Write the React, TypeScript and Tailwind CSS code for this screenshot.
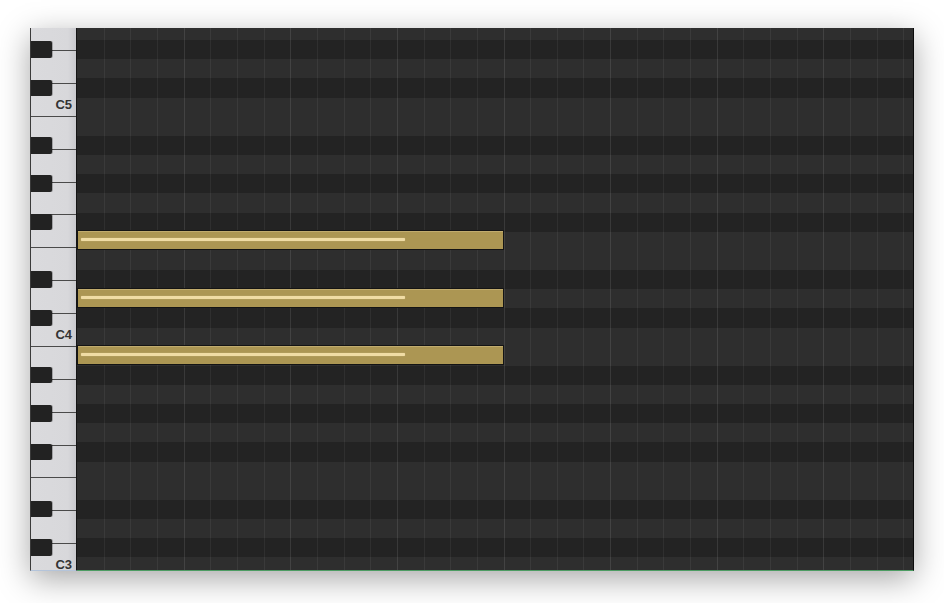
const NAMES = ['C', 'C#', 'D', 'D#', 'E', 'F', 'F#', 'G', 'G#', 'A', 'A#', 'B'];

// rows from the top of the viewport: E5 (partly hidden) down to C3 (partly hidden)
const TOP_MIDI = 76; // E5
const rows = Array.from({ length: 29 }, (_, i) => {
  const midi = TOP_MIDI - i;
  const name = NAMES[midi % 12];
  return { midi, black: name.includes('#') };
});

// white keys, top to bottom, starting at the E5 key
const whiteKeys = Array.from({ length: 17 }, (_, i) => {
  const order = ['E', 'D', 'C', 'B', 'A', 'G', 'F'];
  const name = order[i % 7];
  const octave = 5 - Math.floor((i + 4) / 7);
  return { name, octave };
});

const ROW_H = 19.17;
const notes = [
  { midi: 65, start: 0, beats: 16, velocity: 0.77 }, // F4
  { midi: 62, start: 0, beats: 16, velocity: 0.77 }, // D4
  { midi: 59, start: 0, beats: 16, velocity: 0.77 }, // B3
];
const BEAT_W = 26.67;

function Piano() {
  return (
    <div className="relative w-[47px] h-full shrink-0 overflow-hidden border-l border-l-[#3a3a3a] border-r border-r-[#141414] border-b border-b-[#b4c4da] bg-[linear-gradient(to_right,#dadadd_0%,#d8d8db_82%,#c9c9cd_100%)]">
      <div className="flex flex-col -mt-[9.79px]">
        {whiteKeys.map((k, i) => (
          <div
            key={i}
            className="h-[32.88px] shrink-0 border-b border-[#4a4a4a] flex items-end justify-end pr-[4px] pb-[6px]"
          >
            {k.name === 'C' && (
              <span className="text-[13px] leading-[10px] font-bold text-[#333] font-['Liberation_Sans',Arial,sans-serif]">
                C{k.octave}
              </span>
            )}
          </div>
        ))}
      </div>
      <div className="absolute inset-x-0 top-[-7px] flex flex-col">
        {rows.map((r) => (
          <div key={r.midi} className="h-[19.17px] shrink-0">
            {r.black && (
              <div className="mt-[1.2px] h-[16.4px] w-[21px] bg-[#222222] rounded-r-[2px] shadow-[1px_0_0_rgba(0,0,0,0.25)]" />
            )}
          </div>
        ))}
      </div>
    </div>
  );
}

function Grid() {
  return (
    <div className="relative flex-1 h-full overflow-hidden border-r border-r-[#0c0c0c] border-b border-b-[#4c9c62]">
      <div className="flex flex-col -mt-[7px]">
        {rows.map((r) => (
          <div
            key={r.midi}
            className={r.black ? 'h-[19.17px] shrink-0 bg-[#232323]' : 'h-[19.17px] shrink-0 bg-[#2e2e2e]'}
          />
        ))}
      </div>
      <div className="absolute inset-0 flex">
        {Array.from({ length: 32 }, (_, k) => (
          <div
            key={k}
            className={
              k === 0
                ? 'w-[26.67px] shrink-0'
                : k % 4 === 0
                ? 'w-[26.67px] shrink-0 border-l border-l-[rgba(255,255,255,0.1)]'
                : 'w-[26.67px] shrink-0 border-l border-l-[rgba(255,255,255,0.06)]'
            }
          />
        ))}
      </div>
      {notes.map((n, i) => {
        const row = TOP_MIDI - n.midi;
        const width = n.beats * BEAT_W;
        return (
          <div
            key={i}
            className="absolute h-[20px] border border-[#141414] bg-[#ac9653] shadow-[inset_0_1px_0_rgba(255,240,190,0.25)]"
            style={{ top: row * ROW_H - 7 - 1.8, left: n.start * BEAT_W, width }}
          >
            <div
              className="mt-[7px] ml-[3px] h-[3px] rounded-[1px] bg-[#f0dca4] shadow-[0_0_1px_rgba(255,240,200,0.6)]"
              style={{ width: (width - 6) * n.velocity }}
            />
          </div>
        );
      })}
    </div>
  );
}

export default function App() {
  return (
    <div className="w-[944px] h-[603px] bg-white pt-[28px] pl-[30px] overflow-hidden">
      <div className="flex w-[884px] h-[543px] shadow-[0_8px_30px_rgba(0,0,0,0.35)]">
        <Piano />
        <Grid />
      </div>
    </div>
  );
}
